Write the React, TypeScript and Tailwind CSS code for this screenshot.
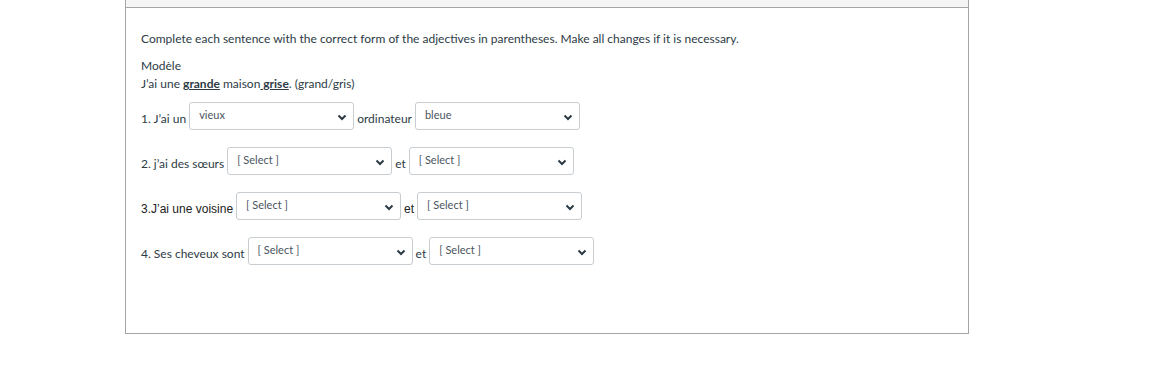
import React from 'react';

// Fila de ejercicio: texto + selects
type Part = { kind: 'text'; value: string; arial?: boolean } | { kind: 'select'; value: string };

const rows: Part[][] = [
  [
    { kind: 'text', value: '1. J\u2019ai un' },
    { kind: 'select', value: 'vieux' },
    { kind: 'text', value: 'ordinateur' },
    { kind: 'select', value: 'bleue' },
  ],
  [
    { kind: 'text', value: '2. j\u2019ai des sœurs' },
    { kind: 'select', value: '[ Select ]' },
    { kind: 'text', value: 'et' },
    { kind: 'select', value: '[ Select ]' },
  ],
  [
    { kind: 'text', value: '3.J\u2019ai une voisine', arial: true },
    { kind: 'select', value: '[ Select ]' },
    { kind: 'text', value: 'et', arial: true },
    { kind: 'select', value: '[ Select ]' },
  ],
  [
    { kind: 'text', value: '4. Ses cheveux sont' },
    { kind: 'select', value: '[ Select ]' },
    { kind: 'text', value: 'et' },
    { kind: 'select', value: '[ Select ]' },
  ],
];

const Chevron = () => (
  <svg width="10" height="7" viewBox="0 0 10 7" className="shrink-0">
    <polyline points="1.5,1.5 5,5 8.5,1.5" fill="none" stroke="#2d3b45" strokeWidth="2" />
  </svg>
);

const FakeSelect = ({ value }: { value: string }) => (
  <div className="flex h-[28px] w-[165px] shrink-0 items-start justify-between rounded-[3px] border border-[#c7cdd1] bg-white pl-[9px] pr-[6px]">
    <span className="pt-[5px] text-[11px] leading-[14px] text-[#4a5560]">{value}</span>
    <span className="pt-[11px]">
      <Chevron />
    </span>
  </div>
);

export default function App() {
  return (
    <div className="min-h-[366px] bg-white font-['Lato','Liberation_Sans',sans-serif] text-[#2d3b45]">
      <div className="ml-[125px] w-[844px] border-x border-b border-[#a5a5a5]">
        <div className="h-[8px] border-b border-[#a5a5a5] bg-[#f5f5f5]" />
        <div className="h-[325px] px-[15px] pt-[22px]">
          <p className="text-[12px] leading-[18px]">
            Complete each sentence with the correct form of the adjectives in parentheses. Make all changes if it is necessary.
          </p>
          <p className="mt-[9px] text-[12px] leading-[18px]">Modèle</p>
          <p className="text-[12px] leading-[18px]">
            J’ai une <u className="font-bold">grande</u> maison<u className="font-bold"> grise</u>. (grand/gris)
          </p>
          <div className="mt-[9px] flex flex-col gap-[17px]">
            {rows.map((row, i) => (
              <div key={i} className="flex h-[28px] items-start gap-[3px]">
                {row.map((p, j) =>
                  p.kind === 'select' ? (
                    <FakeSelect key={j} value={p.value} />
                  ) : (
                    <span
                      key={j}
                      className={`mt-[8px] whitespace-nowrap text-[12px] leading-[18px] ${
                        p.arial ? "font-['Liberation_Sans',Arial,sans-serif] text-[#222]" : ''
                      }`}
                    >
                      {p.value}
                    </span>
                  )
                )}
              </div>
            ))}
          </div>
        </div>
      </div>
    </div>
  );
}
